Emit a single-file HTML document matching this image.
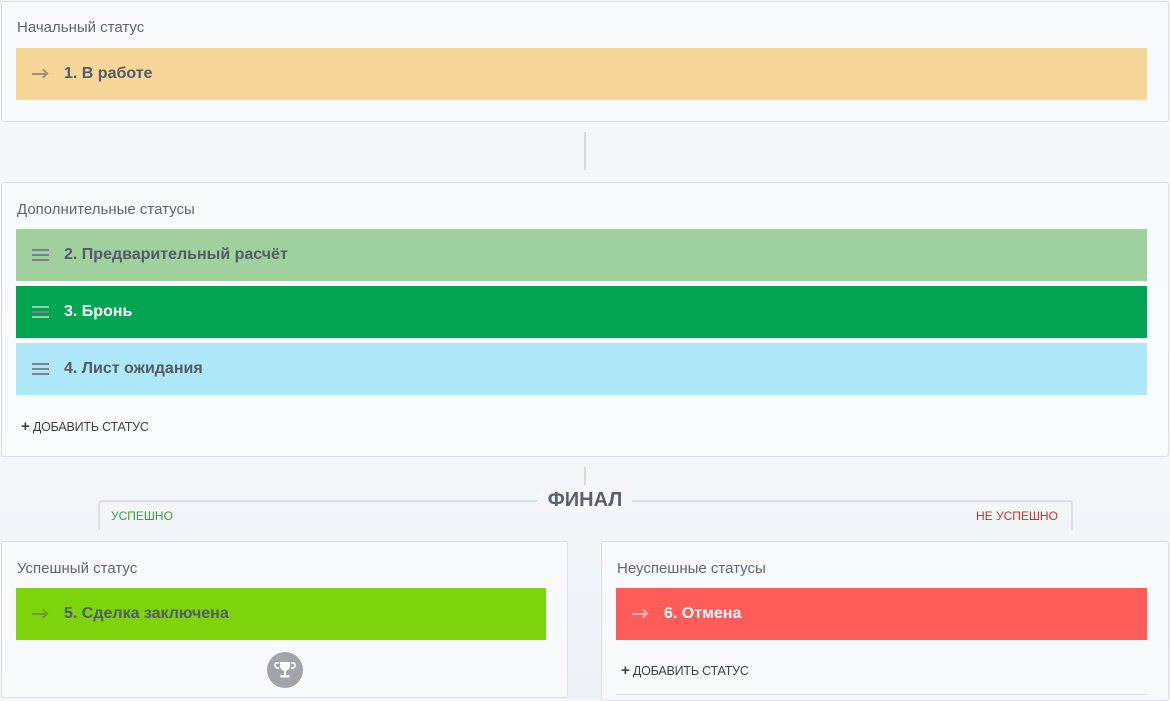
<!DOCTYPE html>
<html><head><meta charset="utf-8"><style>
*{margin:0;padding:0;box-sizing:border-box}
body{width:1170px;height:698px;overflow:hidden;background:linear-gradient(180deg,#f3f5f9 0%,#f5f7fa 60%,#eef2f6 100%);font-family:"Liberation Sans",sans-serif;position:relative}
.box{position:absolute;background:rgba(248,249,252,0.9);border:1px solid #dcdfe4;border-radius:3px}
.lbl{position:absolute;font-size:15px;color:#5f6672}
.bar{position:absolute;height:52px;font-size:16px;font-weight:bold;color:#535a68;line-height:52px;padding-left:48px}
.arr{position:absolute;left:16px;top:25px;width:15px;height:2px;background:currentColor}
.arr:after{content:"";position:absolute;right:0;top:-3px;width:5px;height:5px;border-top:2px solid currentColor;border-right:2px solid currentColor;transform:rotate(45deg);transform-origin:center;right:0px}
.ham{position:absolute;left:16px;top:20px;width:17px;height:12px;border-top:2px solid #7d838e;border-bottom:2px solid #7d838e}
.ham:after{content:"";position:absolute;left:0;right:0;top:3px;border-top:2px solid #7d838e}
.add{position:absolute;font-size:12.5px;color:#3d434d;letter-spacing:-0.2px}
.add b{font-size:15px}
.vl{position:absolute;width:2px;background:#d6d9de}
</style></head><body>
<div class="box" style="left:1px;top:1px;width:1168px;height:121px">
 <div class="lbl" style="left:15px;top:17px">Начальный статус</div>
 <div class="bar" style="left:14px;top:46px;width:1131px;background:#f6d799"><span class="arr" style="color:#a0927a"></span>1. В работе</div>
</div>
<div class="vl" style="left:584px;top:132px;height:38px"></div>
<div class="box" style="left:1px;top:182px;width:1168px;height:275px">
 <div class="lbl" style="left:15px;top:18px">Дополнительные статусы</div>
 <div class="bar" style="left:14px;top:46px;width:1131px;background:#a0d09e"><span class="ham"></span>2. Предварительный расчёт</div>
 <div class="bar" style="left:14px;top:103px;width:1131px;background:#04a552;color:#fff"><span class="ham" style="border-color:#8ad4a8"></span>3. Бронь</div>
 <div class="bar" style="left:14px;top:160px;width:1131px;background:#aee7f8"><span class="ham"></span>4. Лист ожидания</div>
 <div class="add" style="left:19px;top:235px"><b>+</b> ДОБАВИТЬ СТАТУС</div>
</div>
<div class="vl" style="left:584px;top:467px;height:18px"></div>
<div style="position:absolute;left:98px;top:500px;width:975px;height:30px;border:2px solid #dcdfe3;border-bottom:none;border-radius:4px 4px 0 0"></div>
<div style="position:absolute;left:538px;top:489px;width:94px;text-align:center;font-size:20px;font-weight:bold;color:#5a606c;background:#f5f7fa">ФИНАЛ</div>
<div style="position:absolute;left:111px;top:509px;font-size:12px;color:#3f9a3f">УСПЕШНО</div>
<div style="position:absolute;left:976px;top:509px;font-size:12px;color:#c6302f">НЕ УСПЕШНО</div>
<div class="box" style="left:1px;top:541px;width:567px;height:157px">
 <div class="lbl" style="left:15px;top:18px">Успешный статус</div>
 <div class="bar" style="left:14px;top:46px;width:530px;background:#7ed40a"><span class="arr" style="color:#6a9a3a"></span>5. Сделка заключена</div>
 <div style="position:absolute;left:265px;top:110px;width:36px;height:36px;border-radius:50%;background:#a0a4ab">
  <svg width="36" height="36" viewBox="0 0 36 36"><path d="M12 11h-3a3 3 0 0 0 3 5 M24 11h3a3 3 0 0 1-3 5" fill="none" stroke="#fff" stroke-width="1.6"/><path d="M13 10h10v4a5 5 0 0 1-10 0z" fill="#fff"/><rect x="17" y="19" width="2" height="4" fill="#fff"/><rect x="13.5" y="23" width="9" height="2.5" fill="#fff"/></svg>
 </div>
</div>
<div class="box" style="left:601px;top:541px;width:568px;height:160px">
 <div class="lbl" style="left:15px;top:18px">Неуспешные статусы</div>
 <div class="bar" style="left:14px;top:46px;width:531px;background:#fd5c59;color:#fff"><span class="arr" style="color:#fcb0ae"></span>6. Отмена</div>
 <div class="add" style="left:19px;top:120px"><b>+</b> ДОБАВИТЬ СТАТУС</div>
 <div style="position:absolute;left:14px;top:152px;width:531px;border-top:1px solid #dcdfe4"></div>
</div>
</body></html>
